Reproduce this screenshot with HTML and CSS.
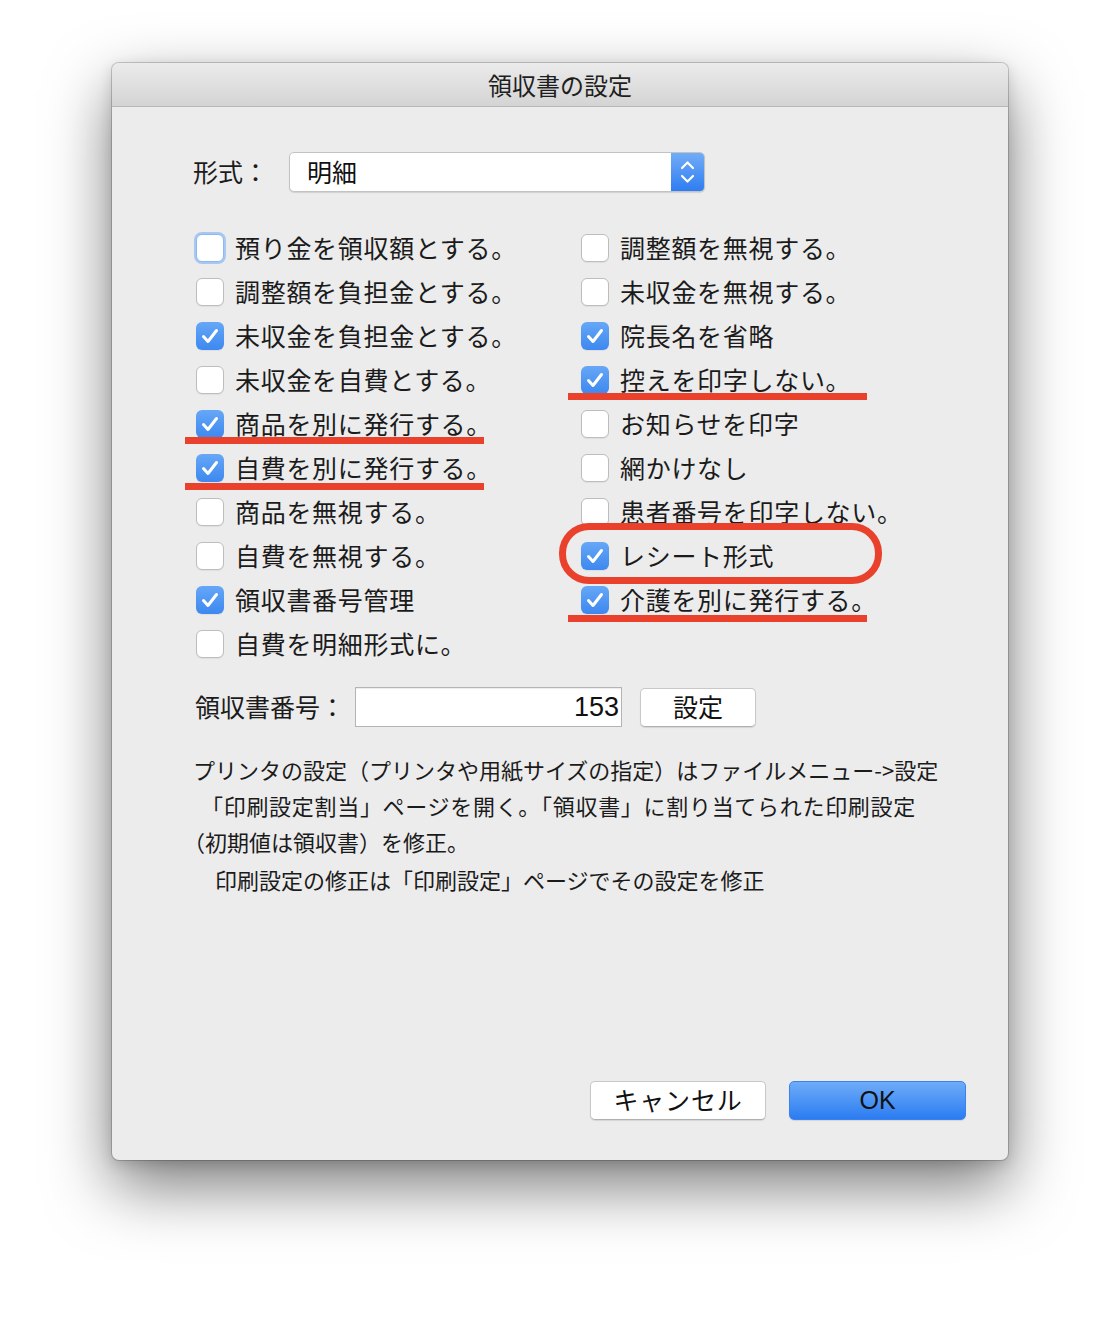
FILE: index.html
```html
<!DOCTYPE html>
<html lang="ja">
<head>
<meta charset="utf-8">
<title>領収書の設定</title>
<link rel="stylesheet" href="styles.css">
</head>
<body>
<div class="window">
  <div class="titlebar">領収書の設定</div>
  <div class="content">
    <div class="form-row">
      <span class="label label-format">形式：</span>
      <div class="select">
        <span class="select-value">明細</span>
        <span class="stepper">
          <svg width="33" height="38" viewBox="0 0 33 38"><path d="M11 15 L16.5 9.5 L22 15 M11 23 L16.5 28.5 L22 23" fill="none" stroke="#fff" stroke-width="2.2" stroke-linecap="round" stroke-linejoin="round"/></svg>
        </span>
      </div>
    </div>

    <div class="options">
      <div class="col">
        <label class="opt"><span class="cb focus"></span><span class="txt">預り金を領収額とする。</span></label>
        <label class="opt"><span class="cb"></span><span class="txt">調整額を負担金とする。</span></label>
        <label class="opt"><span class="cb on"><svg viewBox="0 0 28 28"><path d="M7.5 14.5 L12 19.5 L20.5 8.5"/></svg></span><span class="txt">未収金を負担金とする。</span></label>
        <label class="opt"><span class="cb"></span><span class="txt">未収金を自費とする。</span></label>
        <label class="opt mark-under mark-left"><span class="cb on"><svg viewBox="0 0 28 28"><path d="M7.5 14.5 L12 19.5 L20.5 8.5"/></svg></span><span class="txt">商品を別に発行する。</span></label>
        <label class="opt mark-under mark-left mark-low"><span class="cb on"><svg viewBox="0 0 28 28"><path d="M7.5 14.5 L12 19.5 L20.5 8.5"/></svg></span><span class="txt">自費を別に発行する。</span></label>
        <label class="opt"><span class="cb"></span><span class="txt">商品を無視する。</span></label>
        <label class="opt"><span class="cb"></span><span class="txt">自費を無視する。</span></label>
        <label class="opt"><span class="cb on"><svg viewBox="0 0 28 28"><path d="M7.5 14.5 L12 19.5 L20.5 8.5"/></svg></span><span class="txt">領収書番号管理</span></label>
        <label class="opt"><span class="cb"></span><span class="txt">自費を明細形式に。</span></label>
      </div>
      <div class="col">
        <label class="opt"><span class="cb"></span><span class="txt">調整額を無視する。</span></label>
        <label class="opt"><span class="cb"></span><span class="txt">未収金を無視する。</span></label>
        <label class="opt"><span class="cb on"><svg viewBox="0 0 28 28"><path d="M7.5 14.5 L12 19.5 L20.5 8.5"/></svg></span><span class="txt">院長名を省略</span></label>
        <label class="opt mark-under mark-right"><span class="cb on"><svg viewBox="0 0 28 28"><path d="M7.5 14.5 L12 19.5 L20.5 8.5"/></svg></span><span class="txt">控えを印字しない。</span></label>
        <label class="opt"><span class="cb"></span><span class="txt">お知らせを印字</span></label>
        <label class="opt"><span class="cb"></span><span class="txt">網かけなし</span></label>
        <label class="opt"><span class="cb"></span><span class="txt">患者番号を印字しない。</span></label>
        <label class="opt mark-ring"><span class="cb on"><svg viewBox="0 0 28 28"><path d="M7.5 14.5 L12 19.5 L20.5 8.5"/></svg></span><span class="txt">レシート形式</span></label>
        <label class="opt mark-under mark-right mark-low"><span class="cb on"><svg viewBox="0 0 28 28"><path d="M7.5 14.5 L12 19.5 L20.5 8.5"/></svg></span><span class="txt">介護を別に発行する。</span></label>
      </div>
    </div>

    <div class="form-row number-row">
      <span class="label label-number">領収書番号：</span>
      <div class="input">153</div>
      <div class="btn btn-small">設定</div>
    </div>

    <div class="desc">
      <p class="l1">プリンタの設定（プリンタや用紙サイズの指定）はファイルメニュー-&gt;設定</p>
      <p class="l2">「印刷設定割当」ページを開く。「領収書」に割り当てられた印刷設定</p>
      <p class="l3">（初期値は領収書）を修正。</p>
      <p class="l4">印刷設定の修正は「印刷設定」ページでその設定を修正</p>
    </div>

    <div class="footer">
      <div class="btn btn-cancel">キャンセル</div>
      <div class="btn btn-ok">OK</div>
    </div>
  </div>
</div>
</body>
</html>
```

FILE: styles.css
```css
html, body {
  margin: 0;
  padding: 0;
  background: #ffffff;
}

body {
  width: 1120px;
  height: 1320px;
  overflow: hidden;
  font-family: "Noto Sans CJK JP", "Noto Sans", sans-serif;
  color: #1b1b1b;
}

.window {
  margin: 63px 0 0 112px;
  width: 896px;
  height: 1097px;
  box-sizing: border-box;
  background: #ececec;
  border-radius: 7px;
  box-shadow: 0 0 0 1px rgba(0, 0, 0, 0.18), 0 26px 64px rgba(0, 0, 0, 0.52), 0 4px 14px rgba(0, 0, 0, 0.15);
  display: flex;
  flex-direction: column;
  overflow: hidden;
}

.titlebar {
  height: 43px;
  flex: none;
  border-bottom: 1px solid #b8b8b8;
  background: linear-gradient(#ebebeb, #d4d4d4);
  display: flex;
  align-items: center;
  justify-content: center;
  font-size: 24px;
  color: #1e1e1e;
}

.content {
  flex: 1;
  display: flex;
  flex-direction: column;
  padding: 45px 42px 40px 81px;
}

.form-row {
  display: flex;
  align-items: center;
  height: 40px;
}

.label {
  font-size: 25px;
  line-height: 1;
  flex: none;
  position: relative;
  top: -1px;
}

.label-format {
  width: 96px;
}

.select {
  width: 416px;
  height: 40px;
  box-sizing: border-box;
  background: #fff;
  border: 1px solid #c3c3c3;
  border-radius: 5px;
  box-shadow: 0 1px 1px rgba(0, 0, 0, 0.12);
  display: flex;
  align-items: center;
  overflow: hidden;
}

.select-value {
  flex: 1;
  padding-left: 17px;
  font-size: 25px;
  line-height: 1;
  color: #111;
  position: relative;
  top: -1px;
}

.stepper {
  width: 33px;
  height: 100%;
  flex: none;
  background: linear-gradient(#72acf7, #2f7df1);
  display: flex;
  align-items: center;
  justify-content: center;
}

.options {
  display: flex;
  margin-top: 34px;
  padding-left: 3px;
}

.col {
  width: 386px;
  display: flex;
  flex-direction: column;
}

.opt {
  position: relative;
  height: 44px;
  display: flex;
  align-items: center;
  gap: 11px;
}

.txt {
  font-size: 25px;
  letter-spacing: 0.7px;
  line-height: 1;
  white-space: nowrap;
  color: #1b1b1b;
  position: relative;
  top: -1px;
}

.cb {
  width: 28px;
  height: 28px;
  flex: none;
  box-sizing: border-box;
  border-radius: 6px;
  background: #fff;
  border: 1px solid #bdbdbd;
  box-shadow: 0 1px 1px rgba(0, 0, 0, 0.06);
  display: flex;
  align-items: center;
  justify-content: center;
}

.cb.focus {
  border-color: #8db7ee;
  box-shadow: 0 0 0 2px #a7c8f3;
}

.cb.on {
  border: none;
  background: linear-gradient(#66a7f6, #3d88f0);
}

.cb svg {
  width: 28px;
  height: 28px;
}

.cb svg path {
  fill: none;
  stroke: #fff;
  stroke-width: 3;
  stroke-linecap: round;
  stroke-linejoin: round;
}

/* red annotation marks drawn over the dialog */
.mark-under::after {
  content: "";
  position: absolute;
  top: 35px;
  height: 7px;
  width: 299px;
  background: #e9412b;
}

.mark-left::after {
  left: -11px;
}

.mark-right::after {
  left: -13px;
}

.mark-low::after {
  top: 37px;
}

.mark-ring::after {
  content: "";
  position: absolute;
  left: -22px;
  top: -11px;
  width: 323px;
  height: 61px;
  box-sizing: border-box;
  border: 7px solid #e9412b;
  border-radius: 30px;
}

.number-row {
  margin-top: 21px;
  padding-left: 2px;
}

.label-number {
  width: 160px;
}

.input {
  width: 267px;
  height: 40px;
  box-sizing: border-box;
  background: #fff;
  border: 1px solid #b4b4b4;
  box-shadow: inset 0 1px 1px rgba(0, 0, 0, 0.08);
  display: flex;
  align-items: center;
  justify-content: flex-end;
  padding-right: 2px;
  font-family: "Liberation Sans", "Noto Sans", sans-serif;
  font-size: 27px;
  color: #111;
}

.btn {
  box-sizing: border-box;
  height: 39px;
  border-radius: 5px;
  background: #fff;
  border: 1px solid #c8c8c8;
  border-bottom-color: #b0b0b0;
  box-shadow: 0 1px 1px rgba(0, 0, 0, 0.1);
  display: flex;
  align-items: center;
  justify-content: center;
  padding-bottom: 2px;
  font-size: 25px;
  line-height: 1;
  color: #111;
}

.btn-small {
  width: 116px;
  margin-left: 18px;
}

.desc {
  margin-top: 24px;
  font-size: 22px;
  line-height: 36px;
  color: #1b1b1b;
}

.desc p {
  margin: 0;
  white-space: nowrap;
}

.desc .l2 {
  padding-left: 8px;
  letter-spacing: 0.7px;
}

.desc .l3 {
  margin-left: -10px;
}

.desc .l4 {
  margin-top: 2px;
  padding-left: 22px;
}

.footer {
  margin-top: auto;
  display: flex;
  justify-content: flex-end;
  gap: 23px;
}

.btn-cancel {
  width: 176px;
  font-size: 25px;
  letter-spacing: 0.8px;
}

.btn-ok {
  width: 177px;
  background: linear-gradient(#6eacf8, #2b7cf2);
  border: 1px solid #3a83ee;
  padding-bottom: 0;
  font-family: "Liberation Sans", "Noto Sans", sans-serif;
  font-size: 25px;
  color: #111;
}
```
